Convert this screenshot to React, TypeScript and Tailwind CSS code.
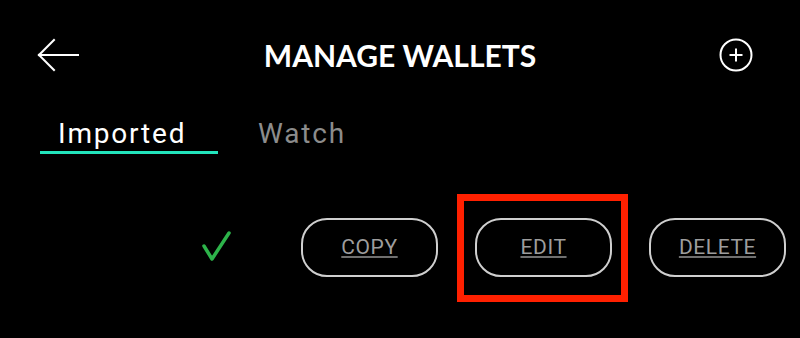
import React from "react";

function BackArrow() {
  return (
    <svg width="44" height="36" viewBox="0 0 44 36" fill="none" stroke="#ffffff" strokeWidth="2" strokeLinecap="square">
      <line x1="3" y1="18" x2="42" y2="18" />
      <line x1="3" y1="18" x2="18" y2="3" />
      <line x1="3" y1="18" x2="18" y2="33" />
    </svg>
  );
}

function PlusCircle() {
  return (
    <svg width="34" height="34" viewBox="0 0 34 34" fill="none" stroke="#ffffff" strokeWidth="2">
      <circle cx="17" cy="17" r="15.5" />
      <line x1="10.5" y1="17" x2="23.5" y2="17" />
      <line x1="17" y1="10.5" x2="17" y2="23.5" />
    </svg>
  );
}

function Check() {
  return (
    <svg width="33" height="34" viewBox="0 0 33 34" fill="none" stroke="#2db34a" strokeWidth="3.5" strokeLinecap="round" strokeLinejoin="round">
      <polyline points="4,15 12,28 29,2" />
    </svg>
  );
}

function Pill({ label, children }: { label: string; children?: React.ReactNode }) {
  return (
    <div className="relative">
      <div className="w-[137px] h-[59px] rounded-[26px] border-2 border-[#cfcfcf] flex items-center justify-center">
        <span className="text-[21px] tracking-[0.6px] text-[#9d9d9d] underline decoration-[#6f6f6f] decoration-2 underline-offset-[2px] leading-none" style={{ fontFamily: "Roboto, sans-serif" }}>
          {label}
        </span>
      </div>
      {children}
    </div>
  );
}

export default function App() {
  return (
    <div className="w-[800px] h-[338px] bg-black overflow-hidden" style={{ fontFamily: "Roboto, sans-serif" }}>
      <div className="h-[110px] grid grid-cols-[1fr_auto_1fr] items-center">
        <div className="pl-[36px] flex items-center">
          <BackArrow />
        </div>
        <div className="text-white font-bold text-[30px] leading-none" style={{ fontFamily: "Lato, sans-serif" }}>
          MANAGE WALLETS
        </div>
        <div className="flex justify-end pr-[47px]">
          <PlusCircle />
        </div>
      </div>

      <div className="flex items-start pl-[40px] mt-[8px]">
        <div className="w-[178px] flex flex-col">
          <span className="pl-[18px] text-[28px] leading-[32px] text-white tracking-[1.8px]">Imported</span>
          <div className="mt-[1px] h-[3px] bg-[#22e4bc]" />
        </div>
        <span className="ml-[40px] text-[28px] leading-[32px] text-[#8c8c8c] tracking-[1.8px]">Watch</span>
      </div>

      <div className="mt-[64px] flex items-center pl-[200px]">
        <Check />
        <div className="ml-[68px] flex items-center gap-[37px]">
          <Pill label="COPY" />
          <Pill label="EDIT">
            <div className="absolute -left-[18px] -right-[16px] -top-[24px] -bottom-[25px] border-[7px] border-[#ff2000]" />
          </Pill>
          <Pill label="DELETE" />
        </div>
      </div>
    </div>
  );
}
